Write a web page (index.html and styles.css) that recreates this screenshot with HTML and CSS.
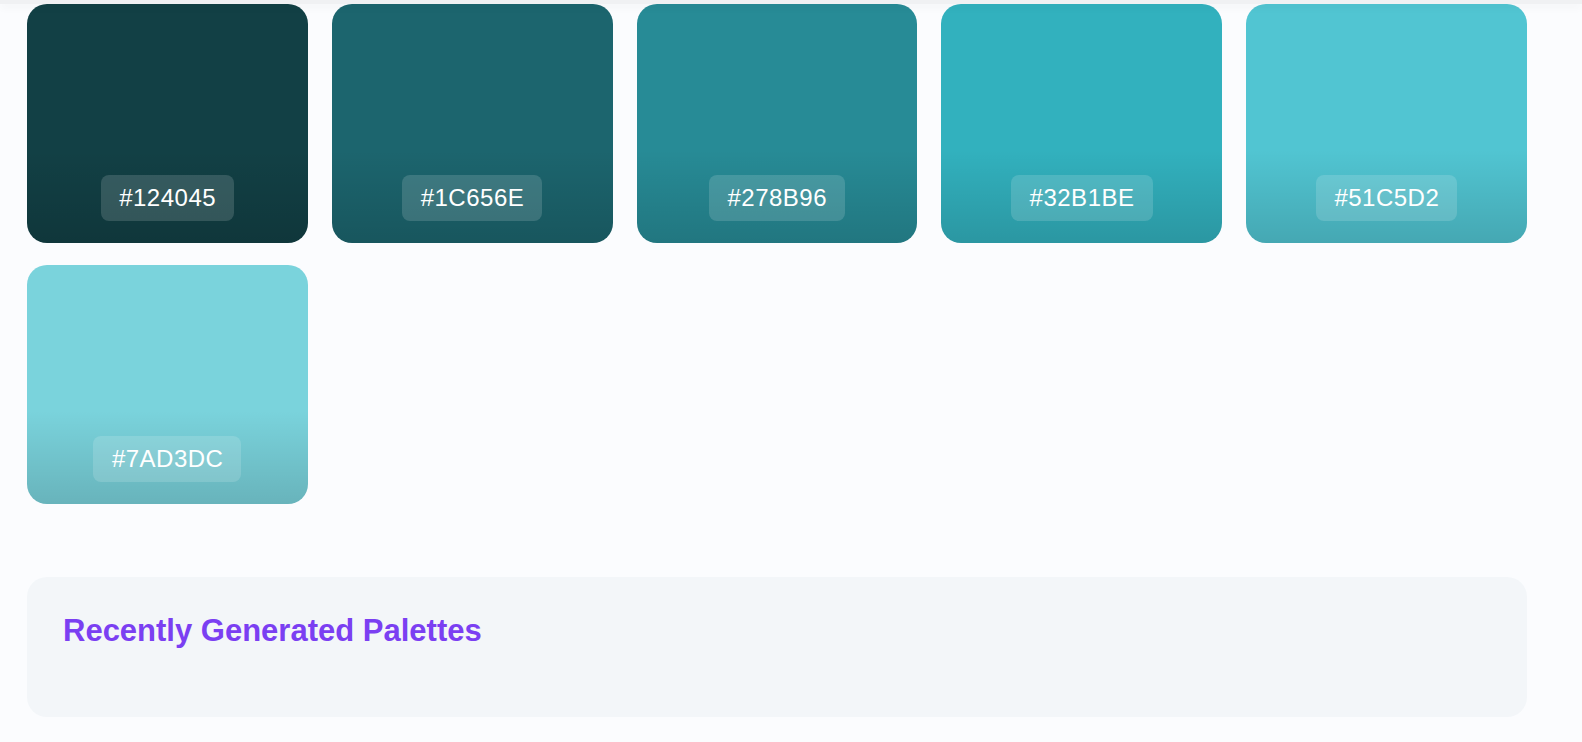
FILE: index.html
```html
<!DOCTYPE html>
<html lang="en">
<head>
<meta charset="utf-8">
<title>Palette</title>
<link rel="stylesheet" href="styles.css">
</head>
<body>
<div class="topbar"></div>
<main class="page">
  <section class="swatches">
    <div class="swatch" style="background-color:#124045"><span class="hex">#124045</span></div>
    <div class="swatch" style="background-color:#1C656E"><span class="hex">#1C656E</span></div>
    <div class="swatch" style="background-color:#278B96"><span class="hex">#278B96</span></div>
    <div class="swatch" style="background-color:#32B1BE"><span class="hex">#32B1BE</span></div>
    <div class="swatch" style="background-color:#51C5D2"><span class="hex">#51C5D2</span></div>
    <div class="swatch" style="background-color:#7AD3DC"><span class="hex">#7AD3DC</span></div>
  </section>
  <section class="recent">
    <h2 class="recent-title">Recently Generated Palettes</h2>
    <div class="recent-list"></div>
  </section>
</main>
</body>
</html>
```
FILE: styles.css
```css
* { box-sizing: border-box; }
html, body { margin: 0; padding: 0; }
body {
  background: #fbfcfe;
  font-family: "Liberation Sans", Arial, sans-serif;
  overflow: hidden;
}
.topbar {
  position: fixed;
  top: 0;
  left: 0;
  right: 0;
  height: 4px;
  background: #f0f1f3;
  box-shadow: 0 3px 8px rgba(0, 0, 0, 0.05);
  z-index: 10;
}
.page {
  width: 1500px;
  margin-left: 27px;
  padding-top: 4px;
}
.swatches {
  display: grid;
  grid-template-columns: repeat(5, 1fr);
  column-gap: 24px;
  row-gap: 22px;
}
.swatch {
  position: relative;
  height: 239px;
  border-radius: 20px;
  overflow: hidden;
  display: flex;
  align-items: flex-end;
  justify-content: center;
  padding: 24px 24px 22px;
  background-image: linear-gradient(to bottom, rgba(0,0,0,0) 0%, rgba(0,0,0,0) 61%, rgba(0,0,0,0.15) 100%);
}
.hex {
  display: inline-block;
  padding: 7px 18px 7px 18.5px;
  background: rgba(255, 255, 255, 0.15);
  border-radius: 8px;
  color: #ffffff;
  font-size: 24px;
  line-height: 32px;
  letter-spacing: 0.5px;
}
.recent {
  margin-top: 73px;
  background: #f3f6f9;
  border-radius: 20px;
  padding: 36px;
  height: 140px;
}
.recent-title {
  margin: 0;
  color: #7b3ff2;
  font-size: 31px;
  line-height: 36px;
  font-weight: 700;
}
```
